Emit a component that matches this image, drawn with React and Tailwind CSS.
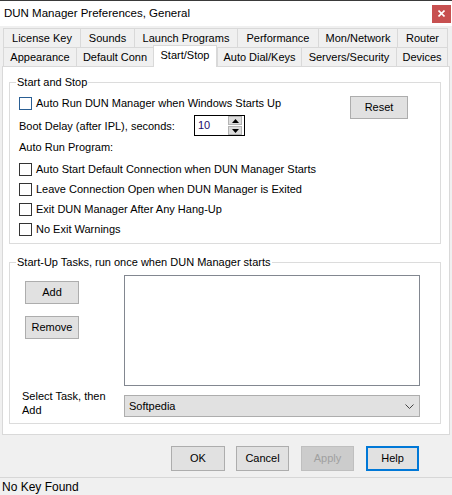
import React from 'react'

const row1 = [
  ['License Key', 'w-[77px]'],
  ['Sounds', 'w-[54px]'],
  ['Launch Programs', 'w-[103px]'],
  ['Performance', 'w-[81px]'],
  ['Mon/Network', 'w-[79px]'],
  ['Router', 'w-[51px] border-r'],
]

const row2 = [
  ['Appearance', 'w-[73px]'],
  ['Default Conn', 'w-[77px]'],
  ['Start/Stop', 'w-[64px]', true],
  ['Auto Dial/Keys', 'w-[84px]'],
  ['Servers/Security', 'w-[95px]'],
  ['Devices', 'w-[52px] border-r'],
]

const Check = ({ label, focus }) => (
  <div className="flex items-center h-[13px] gap-[4px]">
    <span
      className={`w-[13px] h-[13px] shrink-0 bg-white border ${
        focus ? 'border-[#2a5f94]' : 'border-[#333333]'
      }`}
    />
    <span className="leading-[13px] whitespace-nowrap">{label}</span>
  </div>
)

const Btn = ({ children, className = '' }) => (
  <button
    className={`flex items-center justify-center bg-[#e1e1e1] border border-[#adadad] text-black ${className}`}
  >
    {children}
  </button>
)

const Tab = ({ label, w, active }) =>
  active ? (
    <div
      className={`relative z-10 self-end -mb-[1px] h-[22px] flex items-center justify-center bg-white border-t border-l border-r border-[#d9d9d9] pb-[2px] ${w}`}
    >
      {label}
    </div>
  ) : (
    <div
      className={`h-[19px] flex items-center justify-center bg-[#f0f0f0] border-t border-l border-[#d9d9d9] whitespace-nowrap ${w}`}
    >
      {label}
    </div>
  )

export default function App() {
  return (
    <div className="w-[452px] h-[495px] overflow-hidden bg-[#f0f0f0] text-[11px] text-black font-['Liberation_Sans',Arial,sans-serif]">
      {/* Title bar */}
      <div className="h-[26px] bg-white border-t border-[#3a3a3a] flex items-center pl-[4px] pr-[1px]">
        <span className="text-[11.5px]">DUN Manager Preferences, General</span>
        <div className="ml-auto w-[19px] h-[18px] bg-[#c75050] flex items-center justify-center">
          <svg width="7" height="7" viewBox="0 0 7 7">
            <path d="M0.5 0.5 L6.5 6.5 M6.5 0.5 L0.5 6.5" stroke="#fff" strokeWidth="1.6" />
          </svg>
        </div>
      </div>

      {/* Tabs */}
      <div className="pt-[2px] pl-[3px]">
        <div className="flex h-[19px]">
          {row1.map(([l, w]) => (
            <Tab key={l} label={l} w={w} />
          ))}
        </div>
        <div className="flex items-end h-[19px]">
          {row2.map(([l, w, a]) => (
            <Tab key={l} label={l} w={w} active={a} />
          ))}
        </div>
      </div>

      {/* Panel */}
      <div className="ml-[2px] w-[448px] h-[369px] bg-white border border-[#d9d9d9]">
        <fieldset className="mt-[9px] ml-[6px] w-[432px] min-w-0 border border-[#dcdcdc]">
          <legend className="ml-[6px] px-[1px] leading-[13px]">Start and Stop</legend>
          <div className="flex mt-[7px] pb-[7px]">
            <div className="flex-1 flex flex-col pl-[9px] pt-[1px]">
              <Check label="Auto Run DUN Manager when Windows Starts Up" focus />
              <div className="flex items-center h-[21px] mt-[5px]">
                <span className="w-[175px] pt-[2px]">Boot Delay (after IPL), seconds:</span>
                <div className="w-[51px] h-[21px] bg-white border border-black flex items-start">
                  <span className="pl-[3px] pt-[2px] leading-[14px] text-[#1e0a6a]">10</span>
                  <div className="ml-auto mr-[2px] flex flex-col gap-[1px]">
                    <div className="w-[14px] h-[9px] bg-[#dcdcdc] border border-[#b4b4b4] flex items-center justify-center">
                      <svg width="7" height="4" viewBox="0 0 7 4">
                        <path d="M3.5 0 L7 4 L0 4 Z" fill="#000" />
                      </svg>
                    </div>
                    <div className="w-[14px] h-[9px] bg-[#dcdcdc] border border-[#b4b4b4] flex items-center justify-center">
                      <svg width="7" height="4" viewBox="0 0 7 4">
                        <path d="M0 0 L7 0 L3.5 4 Z" fill="#000" />
                      </svg>
                    </div>
                  </div>
                </div>
              </div>
              <div className="h-[13px] mt-[5px] leading-[13px]">Auto Run Program:</div>
              <div className="flex flex-col gap-[7px] mt-[9px]">
                <Check label="Auto Start Default Connection when DUN Manager Starts" />
                <Check label="Leave Connection Open when DUN Manager is Exited" />
                <Check label="Exit DUN Manager After Any Hang-Up" />
                <Check label="No Exit Warnings" />
              </div>
            </div>
            <Btn className="w-[58px] h-[23px] mr-[32px] shrink-0">Reset</Btn>
          </div>
        </fieldset>

        <fieldset className="mt-[12px] ml-[6px] w-[432px] min-w-0 border border-[#dcdcdc]">
          <legend className="ml-[6px] px-[1px] leading-[13px]">
            Start-Up Tasks, run once when DUN Manager starts
          </legend>
          <div className="mt-[6px] pb-[6px]">
            <div className="flex h-[111px]">
              <div className="w-[114px] pl-[15px] pt-[6px] flex flex-col">
                <Btn className="w-[54px] h-[23px]">Add</Btn>
                <Btn className="w-[54px] h-[23px] mt-[12px]">Remove</Btn>
              </div>
              <div className="w-[296px] h-[111px] bg-white border border-[#828790]" />
            </div>
            <div className="flex items-start h-[22px] mt-[9px]">
              <div className="w-[114px] pl-[12px] -mt-[6px] leading-[14px]">
                Select Task, then
                <br />
                Add
              </div>
              <div className="w-[296px] h-[22px] bg-[#e1e1e1] border border-[#adadad] flex items-center pl-[4px] pr-[5px]">
                <span>Softpedia</span>
                <svg className="ml-auto" width="9" height="5" viewBox="0 0 9 5">
                  <path d="M0.5 0.5 L4.5 4.5 L8.5 0.5" fill="none" stroke="#444" strokeWidth="1" />
                </svg>
              </div>
            </div>
          </div>
        </fieldset>
      </div>

      {/* Dialog buttons */}
      <div className="flex h-[25px] mt-[11px]">
        <Btn className="ml-[171px] w-[54px] h-[25px]">OK</Btn>
        <Btn className="ml-[11px] w-[53px] h-[25px]">Cancel</Btn>
        <button className="ml-[12px] w-[53px] h-[25px] bg-[#cccccc] border border-[#bfbfbf] text-[#a0a0a0]">
          Apply
        </button>
        <button className="ml-[12px] w-[53px] h-[25px] bg-[#e1e1e1] border-2 border-[#0078d7] text-black">
          Help
        </button>
      </div>

      {/* Status bar */}
      <div className="mt-[6px] h-[18px] border-t border-[#d7d7d7] flex items-center pl-[2px] text-[12px]">
        No Key Found
      </div>
    </div>
  )
}
